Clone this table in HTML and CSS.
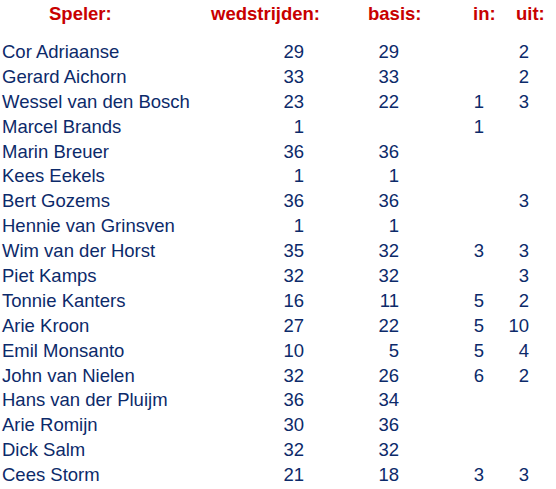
FILE: index.html
```html
<!DOCTYPE html>
<html>
<head>
<meta charset="utf-8">
<link rel="stylesheet" href="styles.css">
</head>
<body>
<div class="table">
  <div class="row head">
    <div class="c name">Speler:</div>
    <div class="c wed">wedstrijden:</div>
    <div class="c bas">basis:</div>
    <div class="c in">in:</div>
    <div class="c uit">uit:</div>
  </div>
  <div class="body">
    <div class="row"><div class="c name">Cor Adriaanse</div><div class="c wed">29</div><div class="c bas">29</div><div class="c in"></div><div class="c uit">2</div></div>
    <div class="row"><div class="c name">Gerard Aichorn</div><div class="c wed">33</div><div class="c bas">33</div><div class="c in"></div><div class="c uit">2</div></div>
    <div class="row"><div class="c name">Wessel van den Bosch</div><div class="c wed">23</div><div class="c bas">22</div><div class="c in">1</div><div class="c uit">3</div></div>
    <div class="row"><div class="c name">Marcel Brands</div><div class="c wed">1</div><div class="c bas"></div><div class="c in">1</div><div class="c uit"></div></div>
    <div class="row"><div class="c name">Marin Breuer</div><div class="c wed">36</div><div class="c bas">36</div><div class="c in"></div><div class="c uit"></div></div>
    <div class="row"><div class="c name">Kees Eekels</div><div class="c wed">1</div><div class="c bas">1</div><div class="c in"></div><div class="c uit"></div></div>
    <div class="row"><div class="c name">Bert Gozems</div><div class="c wed">36</div><div class="c bas">36</div><div class="c in"></div><div class="c uit">3</div></div>
    <div class="row"><div class="c name">Hennie van Grinsven</div><div class="c wed">1</div><div class="c bas">1</div><div class="c in"></div><div class="c uit"></div></div>
    <div class="row"><div class="c name">Wim van der Horst</div><div class="c wed">35</div><div class="c bas">32</div><div class="c in">3</div><div class="c uit">3</div></div>
    <div class="row"><div class="c name">Piet Kamps</div><div class="c wed">32</div><div class="c bas">32</div><div class="c in"></div><div class="c uit">3</div></div>
    <div class="row"><div class="c name">Tonnie Kanters</div><div class="c wed">16</div><div class="c bas">11</div><div class="c in">5</div><div class="c uit">2</div></div>
    <div class="row"><div class="c name">Arie Kroon</div><div class="c wed">27</div><div class="c bas">22</div><div class="c in">5</div><div class="c uit">10</div></div>
    <div class="row"><div class="c name">Emil Monsanto</div><div class="c wed">10</div><div class="c bas">5</div><div class="c in">5</div><div class="c uit">4</div></div>
    <div class="row"><div class="c name">John van Nielen</div><div class="c wed">32</div><div class="c bas">26</div><div class="c in">6</div><div class="c uit">2</div></div>
    <div class="row"><div class="c name">Hans van der Pluijm</div><div class="c wed">36</div><div class="c bas">34</div><div class="c in"></div><div class="c uit"></div></div>
    <div class="row"><div class="c name">Arie Romijn</div><div class="c wed">30</div><div class="c bas">36</div><div class="c in"></div><div class="c uit"></div></div>
    <div class="row"><div class="c name">Dick Salm</div><div class="c wed">32</div><div class="c bas">32</div><div class="c in"></div><div class="c uit"></div></div>
    <div class="row"><div class="c name">Cees Storm</div><div class="c wed">21</div><div class="c bas">18</div><div class="c in">3</div><div class="c uit">3</div></div>
  </div>
</div>
</body>
</html>
```

FILE: styles.css
```css
html, body {
  margin: 0;
  padding: 0;
  background: #ffffff;
}
body {
  font-family: "Liberation Sans", Arial, sans-serif;
  font-size: 18.5px;
  color: #0c2a6a;
}
.table {
  width: 556px;
}
.row {
  display: grid;
  grid-template-columns: 200px 120px 100px 80px 56px;
  height: 24.9px;
  line-height: 24.9px;
  white-space: nowrap;
}
.head {
  color: #c80000;
  font-weight: bold;
  height: 26px;
  line-height: 24px;
  padding-top: 2px;
  margin-bottom: 12px;
}
.body .c {
  text-align: right;
}
.body .name {
  text-align: left;
  padding-left: 2px;
}
.body .wed { padding-right: 16px; }
.body .bas { padding-right: 21px; }
.body .in { padding-right: 16px; }
.body .uit { padding-right: 27px; }
.head .name { padding-left: 49px; }
.head .wed { padding-left: 11px; }
.head .bas { padding-left: 48px; }
.head .in { padding-left: 53px; }
.head .uit { padding-left: 16px; }
```
